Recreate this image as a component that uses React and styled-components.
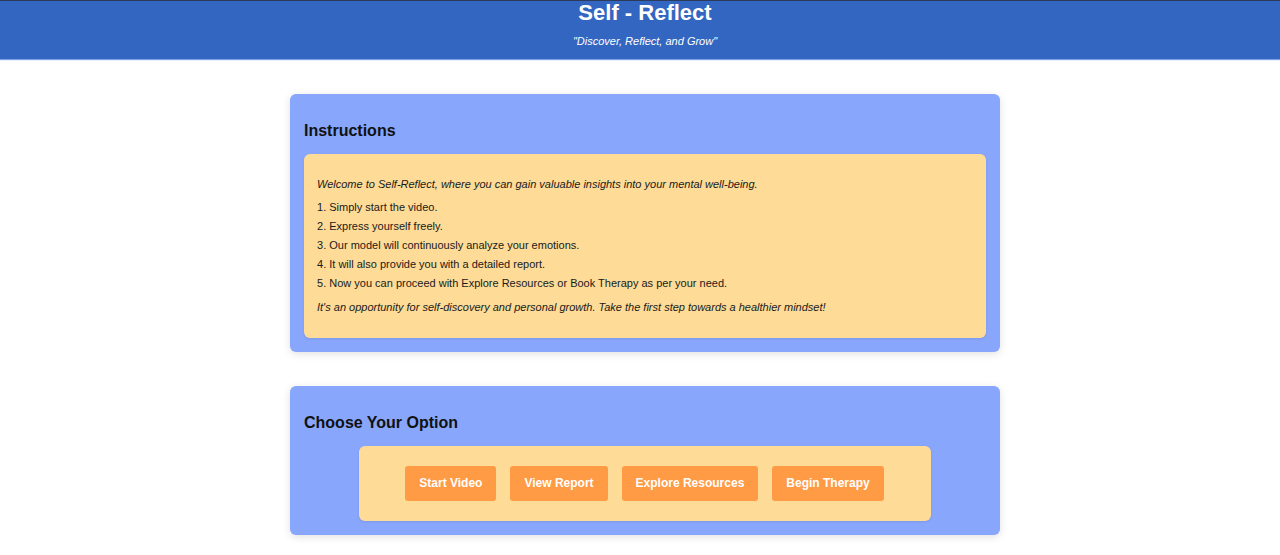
import React from "react";
import styled, { createGlobalStyle } from "styled-components";

const GlobalStyle = createGlobalStyle`
  html, body {
    margin: 0;
    padding: 0;
    background: #ffffff;
    font-family: "Liberation Sans", Arial, sans-serif;
    color: #111;
  }
`;

const Header = styled.header`
  background: #3366c0;
  border-top: 1px solid #2b3b5c;
  box-shadow: 0 1px 1px rgba(110, 150, 230, 0.9);
  height: 58px;
  padding-left: 10px;
  text-align: center;
  color: #fff;

  h1 {
    margin: 0;
    font-size: 22px;
    line-height: 23px;
    font-weight: bold;
  }

  p {
    margin: 10px 0 0;
    font-size: 11px;
    line-height: 14px;
    font-style: italic;
  }
`;

const Main = styled.main`
  padding: 35px 0 20px 10px;
  display: flex;
  flex-direction: column;
  align-items: center;
  gap: 34px;
`;

const Card = styled.section`
  width: 710px;
  box-sizing: border-box;
  padding: 14px;
  background: #87a6fc;
  border-radius: 6px;
  box-shadow: 0 2px 8px rgba(0, 0, 0, 0.12);

  h2 {
    margin: 13px 0 14px;
    font-size: 16px;
    line-height: 19px;
    font-weight: bold;
    color: #111;
  }
`;

const Panel = styled.div`
  background: #fedb97;
  border-radius: 6px;
  box-shadow: 0 1px 3px rgba(0, 0, 0, 0.08);
  padding: ${(p) => (p.$compact ? "20px 47px 20px 46px" : "14px 13px")};
  ${(p) => p.$compact && "width: fit-content; margin: 0 auto; display: flex; gap: 14px;"}
  font-size: 11px;
  line-height: 13px;
  color: #1a1a1a;

  p {
    margin: 10px 0;
    font-style: italic;
  }
`;

const Steps = styled.ol`
  list-style: none;
  margin: 0 0 11px;
  padding: 0;

  li {
    margin-bottom: 6px;
  }
`;

const Button = styled.button`
  background: #ff9a45;
  color: #fff;
  border: none;
  border-radius: 3px;
  padding: 10px 14px;
  font-family: "Liberation Sans", Arial, sans-serif;
  font-size: 12px;
  line-height: 15px;
  font-weight: bold;
  cursor: pointer;
`;

const steps = [
  "Simply start the video.",
  "Express yourself freely.",
  "Our model will continuously analyze your emotions.",
  "It will also provide you with a detailed report.",
  "Now you can proceed with Explore Resources or Book Therapy as per your need.",
];

const options = ["Start Video", "View Report", "Explore Resources", "Begin Therapy"];

export default function App() {
  return (
    <>
      <GlobalStyle />
      <Header>
        <h1>Self - Reflect</h1>
        <p>"Discover, Reflect, and Grow"</p>
      </Header>
      <Main>
        <Card>
          <h2>Instructions</h2>
          <Panel>
            <p>Welcome to Self-Reflect, where you can gain valuable insights into your mental well-being.</p>
            <Steps>
              {steps.map((s, i) => (
                <li key={i}>
                  {i + 1}. {s}
                </li>
              ))}
            </Steps>
            <p>It's an opportunity for self-discovery and personal growth. Take the first step towards a healthier mindset!</p>
          </Panel>
        </Card>
        <Card>
          <h2>Choose Your Option</h2>
          <Panel $compact>
            {options.map((o) => (
              <Button key={o}>{o}</Button>
            ))}
          </Panel>
        </Card>
      </Main>
    </>
  );
}
